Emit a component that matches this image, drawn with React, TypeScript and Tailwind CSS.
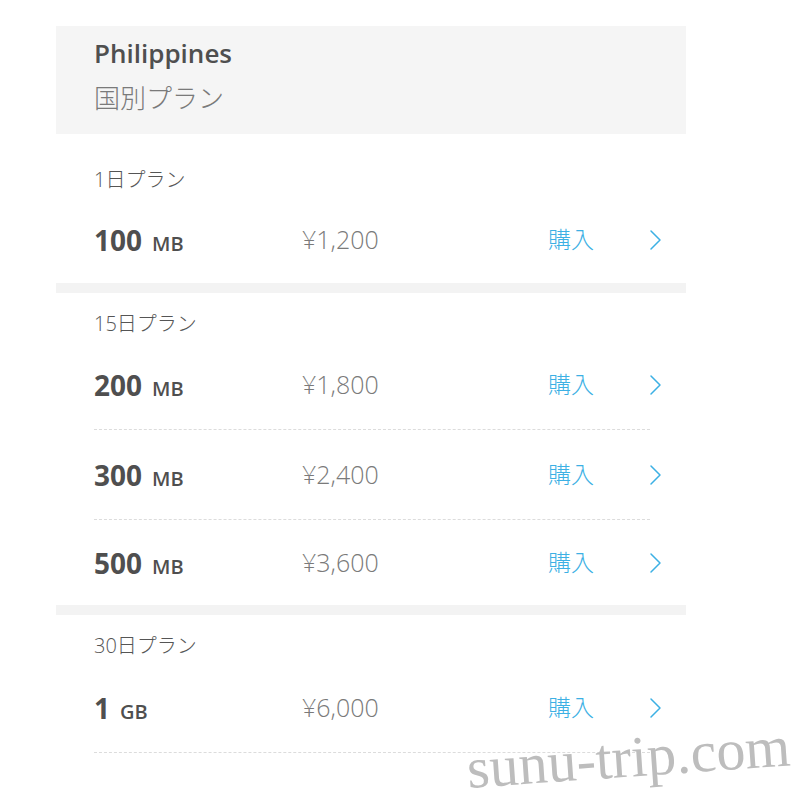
import React from "react";

const font = { fontFamily: '"Open Sans", "Noto Sans CJK JP", sans-serif' };

interface Plan {
  amount: string;
  unit: string;
  price: string;
}

function Chevron() {
  return (
    <svg width="14" height="24" viewBox="0 0 14 24" fill="none">
      <path d="M3 3 L12 12 L3 21" stroke="#3cb0e4" strokeWidth="1.5" strokeLinecap="round" strokeLinejoin="round" />
    </svg>
  );
}

function Row({ plan, h, divider }: { plan: Plan; h: string; divider: boolean }) {
  return (
    <div className={`ml-[38px] mr-[36px] flex items-center ${h} ${divider ? "border-b border-dashed border-[#dcdcdc]" : ""}`}>
      <div className="w-[208px] shrink-0 text-[#4f4f4f] font-bold">
        <span className="text-[28px]">{plan.amount}</span>
        <span className="text-[20px] ml-[10px] font-semibold">{plan.unit}</span>
      </div>
      <div className="w-[246px] shrink-0 text-[25px] text-[#7a7a7a] font-light">{plan.price}</div>
      <div className="w-[100px] shrink-0 text-[23px] text-[#3cb0e4] font-light">購入</div>
      <div className="flex shrink-0 items-center">
        <Chevron />
      </div>
    </div>
  );
}

function Label({ children, pt }: { children: React.ReactNode; pt: string }) {
  return <div className={`${pt} pl-[38px] text-[20px] leading-[24px] text-[#555] font-light`}>{children}</div>;
}

function Band() {
  return <div className="h-[10px] bg-[#f3f3f3]" />;
}

export default function App() {
  return (
    <div className="relative w-[800px] h-[800px] overflow-hidden bg-white" style={font}>
      <div className="ml-[56px] w-[630px] pt-[26px]">
        <div className="h-[108px] bg-[#f5f5f5] pl-[38px] pt-[12px]">
          <div className="text-[26px] leading-[30px] font-semibold text-[#4f4f4f]">Philippines</div>
          <div className="mt-[15px] text-[26px] leading-[30px] text-[#7a7a7a] font-light">国別プラン</div>
        </div>

        <div>
          <Label pt="pt-[34px]">1日プラン</Label>
          <div className="h-[4px]" />
          <Row plan={{ amount: "100", unit: "MB", price: "¥1,200" }} h="h-[87px]" divider={false} />
        </div>
        <Band />

        <div>
          <Label pt="pt-[19px]">15日プラン</Label>
          <div className="h-[4px]" />
          <Row plan={{ amount: "200", unit: "MB", price: "¥1,800" }} h="h-[90px]" divider />
          <Row plan={{ amount: "300", unit: "MB", price: "¥2,400" }} h="h-[90px]" divider />
          <Row plan={{ amount: "500", unit: "MB", price: "¥3,600" }} h="h-[85px]" divider={false} />
        </div>
        <Band />

        <div>
          <Label pt="pt-[19px]">30日プラン</Label>
          <div className="h-[5px]" />
          <Row plan={{ amount: "1", unit: "GB", price: "¥6,000" }} h="h-[90px]" divider />
        </div>
      </div>

      <div
        className="absolute left-[467px] top-[747px] text-[58px] leading-[0.75] text-[#bdbdbd] -rotate-[4deg] origin-left whitespace-nowrap"
        style={{ fontFamily: '"Liberation Serif", serif' }}
      >
        sunu-trip.com
      </div>
    </div>
  );
}
